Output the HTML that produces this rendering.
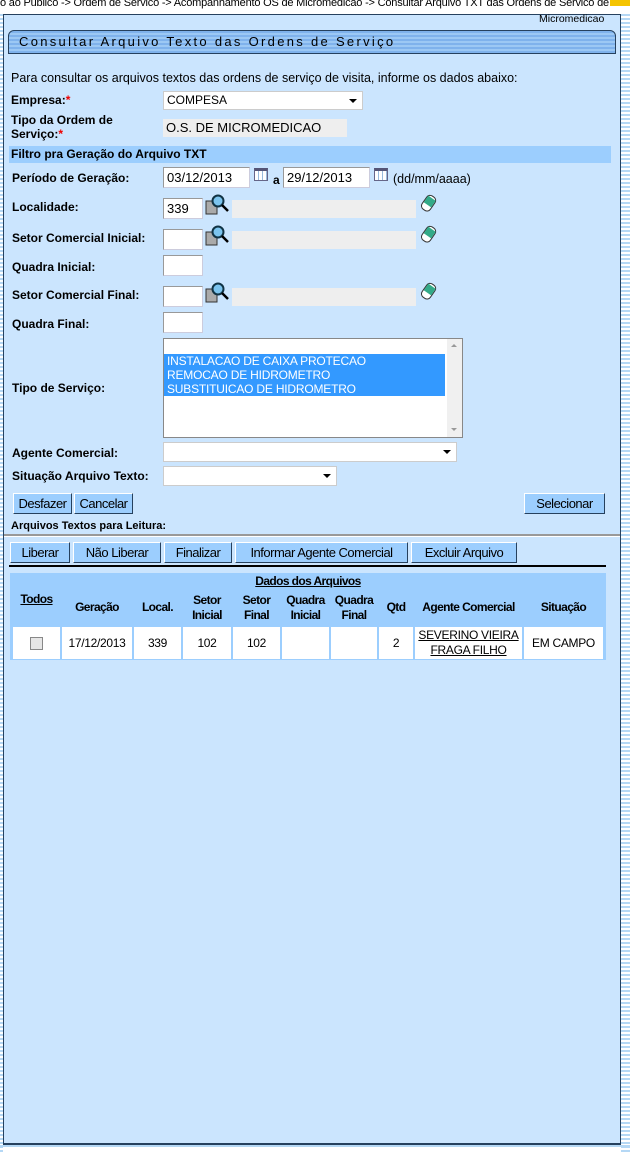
<!DOCTYPE html><html><head><meta charset="utf-8"><style>
body{margin:0;width:630px;height:1156px;position:relative;overflow:hidden;background:#fff;font-family:"Liberation Sans",Arial,sans-serif;font-size:12px;color:#000}
.a{position:absolute}
.stripes{background:repeating-linear-gradient(#fff 0 2px,#b5d8f5 2px 4px)}
.panel{left:3px;top:14px;width:616px;height:1128px;background:#cbe5fe;border:1px solid #26415e;border-bottom-width:2px}
.lbl{font-weight:bold;font-size:12px}
.in{background:#fff;border:1px solid #ccd;border-top-color:#999;border-left-color:#999;height:20px;box-sizing:border-box;font-size:13px;padding:2px 3px}
.ro{background:#eee;height:18px}
.btn{background:#9ccefe;border:1px solid #fff;border-right-color:#26415e;border-bottom-color:#26415e;height:21px;box-sizing:border-box;font-size:13px;text-align:center;line-height:19px;white-space:nowrap;letter-spacing:-0.5px}
.th{background:#9ccefe;font-weight:bold;text-align:center;font-size:12px;white-space:nowrap;letter-spacing:-0.6px}
.td{background:#fff;text-align:center;font-size:12px;white-space:nowrap;letter-spacing:-0.3px}
.sel{background:#fff;border:1px solid #ccc;box-sizing:border-box;font-size:12px;padding:2px 4px}
.arr{position:absolute;right:5px;top:7px;width:0;height:0;border-left:4px solid transparent;border-right:4px solid transparent;border-top:4px solid #000}
.req{color:#e00}
</style></head><body>
<div class="a stripes" style="left:0;top:12px;width:3px;height:1140px"></div>
<div class="a stripes" style="left:621px;top:12px;width:9px;height:1140px"></div>
<div class="a" style="left:0;top:1145px;width:630px;height:2px;background:#b5d8f5"></div>
<div class="a" style="left:0;top:-3px;white-space:nowrap;font-size:11px;background:#fff;letter-spacing:-0.2px">o ao Publico -&gt; Ordem de Servico -&gt; Acompanhamento OS de Micromedicao -&gt; Consultar Arquivo TXT das Ordens de Servico de</div>
<div class="a" style="left:610px;top:0;width:20px;height:6px;background:#f5c400"></div>
<div class="a panel"></div>
<div class="a" style="left:539px;top:13px;font-size:10.5px">Micromedicao</div>
<div class="a" style="left:8px;top:30px;width:606px;height:22px;border:1px solid #26415e;border-radius:6px 6px 0 0;background:repeating-linear-gradient(#7fb2ec 0 2px,#9cc8f4 2px 4px)"></div>
<div class="a" style="left:19px;top:34px;font-size:13px;letter-spacing:2.3px">Consultar Arquivo Texto das Ordens de Serviço</div>
<div class="a" style="left:11px;top:71px;font-size:12.5px">Para consultar os arquivos textos das ordens de serviço de visita, informe os dados abaixo:</div>
<div class="a lbl" style="left:11px;top:93px">Empresa:<span class="req">*</span></div>
<div class="a sel" style="left:163px;top:91px;width:200px;height:19px;font-size:12px;padding:1px 3px">COMPESA<span class="arr"></span></div>
<div class="a lbl" style="left:11px;top:113px;line-height:14px">Tipo da Ordem de<br>Serviço:<span class="req">*</span></div>
<div class="a ro" style="left:163px;top:119px;width:184px;font-size:13px;padding:1px 3px;box-sizing:border-box;height:18px">O.S. DE MICROMEDICAO</div>
<div class="a lbl" style="left:9px;top:146px;width:600px;height:17px;background:#9ccefe;line-height:17px;padding-left:2px">Filtro pra Geração do Arquivo TXT</div>
<div class="a lbl" style="left:12px;top:171px">Período de Geração:</div>
<div class="a in" style="left:163px;top:167px;width:87px;height:21px">03/12/2013</div>
<div class="a" style="left:254px;top:168px;width:14px;height:13px;border:1px solid #668;background:repeating-linear-gradient(90deg,#fff 0 3px,#9bd 3px 4px);box-sizing:border-box;border-top:3px solid #557"></div>
<div class="a lbl" style="left:273px;top:173px">a</div>
<div class="a in" style="left:283px;top:167px;width:87px;height:21px">29/12/2013</div>
<div class="a" style="left:374px;top:168px;width:14px;height:13px;border:1px solid #668;background:repeating-linear-gradient(90deg,#fff 0 3px,#9bd 3px 4px);box-sizing:border-box;border-top:3px solid #557"></div>
<div class="a" style="left:393px;top:172px;font-size:12.5px">(dd/mm/aaaa)</div>

<div class="a lbl" style="left:12px;top:200px">Localidade:</div>
<div class="a in" style="left:163px;top:198px;width:40px;height:21px">339</div>
<div class="a lbl" style="left:12px;top:231px">Setor Comercial Inicial:</div>
<div class="a in" style="left:163px;top:229px;width:40px;height:21px"></div>
<div class="a lbl" style="left:12px;top:260px">Quadra Inicial:</div>
<div class="a in" style="left:163px;top:255px;width:40px;height:21px"></div>
<div class="a lbl" style="left:12px;top:288px">Setor Comercial Final:</div>
<div class="a in" style="left:163px;top:286px;width:40px;height:21px"></div>
<div class="a lbl" style="left:12px;top:317px">Quadra Final:</div>
<div class="a in" style="left:163px;top:312px;width:40px;height:21px"></div>

<div class="a ro" style="left:232px;top:200px;width:184px"></div>
<div class="a ro" style="left:232px;top:231px;width:184px"></div>
<div class="a ro" style="left:232px;top:288px;width:184px"></div>
<svg class="a" style="left:205px;top:193px" width="26" height="26"><rect x="1" y="8" width="11" height="13" fill="#aaa" stroke="#333"/><circle cx="13" cy="8" r="5.5" fill="#7cc4ee" stroke="#134"  stroke-width="2"/><line x1="17" y1="12" x2="23" y2="18" stroke="#000" stroke-width="2.5"/></svg>
<svg class="a" style="left:205px;top:224px" width="26" height="26"><rect x="1" y="8" width="11" height="13" fill="#aaa" stroke="#333"/><circle cx="13" cy="8" r="5.5" fill="#7cc4ee" stroke="#134" stroke-width="2"/><line x1="17" y1="12" x2="23" y2="18" stroke="#000" stroke-width="2.5"/></svg>
<svg class="a" style="left:205px;top:281px" width="26" height="26"><rect x="1" y="8" width="11" height="13" fill="#aaa" stroke="#333"/><circle cx="13" cy="8" r="5.5" fill="#7cc4ee" stroke="#134" stroke-width="2"/><line x1="17" y1="12" x2="23" y2="18" stroke="#000" stroke-width="2.5"/></svg>
<svg class="a" style="left:419px;top:194px" width="18" height="20"><g transform="rotate(35 9 10)"><rect x="4" y="1" width="10" height="16" rx="4" fill="#fff" stroke="#333"/><rect x="4.5" y="3" width="9" height="8" fill="#3a8" /></g></svg>
<svg class="a" style="left:419px;top:225px" width="18" height="20"><g transform="rotate(35 9 10)"><rect x="4" y="1" width="10" height="16" rx="4" fill="#fff" stroke="#333"/><rect x="4.5" y="3" width="9" height="8" fill="#3a8" /></g></svg>
<svg class="a" style="left:419px;top:282px" width="18" height="20"><g transform="rotate(35 9 10)"><rect x="4" y="1" width="10" height="16" rx="4" fill="#fff" stroke="#333"/><rect x="4.5" y="3" width="9" height="8" fill="#3a8" /></g></svg>

<div class="a lbl" style="left:12px;top:381px">Tipo de Serviço:</div>
<div class="a" style="left:163px;top:338px;width:300px;height:100px;background:#fff;border:1px solid #888;box-sizing:border-box"></div>
<div class="a" style="left:447px;top:339px;width:15px;height:98px;background:#f0f0f0"></div>
<div class="a" style="left:451px;top:344px;border-left:3px solid transparent;border-right:3px solid transparent;border-bottom:3px solid #999"></div>
<div class="a" style="left:451px;top:428px;border-left:3px solid transparent;border-right:3px solid transparent;border-top:3px solid #999"></div>
<div class="a" style="left:164px;top:354px;width:281px;height:42px;background:#3399ff;color:#fff;font-size:12px;line-height:14px;padding-left:3px;box-sizing:border-box;letter-spacing:-0.2px">INSTALACAO DE CAIXA PROTECAO<br>REMOCAO DE HIDROMETRO<br>SUBSTITUICAO DE HIDROMETRO</div>

<div class="a lbl" style="left:12px;top:446px">Agente Comercial:</div>
<div class="a sel" style="left:163px;top:442px;width:294px;height:20px"><span class="arr"></span></div>
<div class="a lbl" style="left:12px;top:469px">Situação Arquivo Texto:</div>
<div class="a sel" style="left:163px;top:466px;width:174px;height:20px"><span class="arr"></span></div>

<div class="a btn" style="left:13px;top:493px;width:59px">Desfazer</div>
<div class="a btn" style="left:74px;top:493px;width:59px">Cancelar</div>
<div class="a btn" style="left:524px;top:493px;width:81px">Selecionar</div>
<div class="a" style="left:11px;top:520px;font-weight:bold;font-size:11px">Arquivos Textos para Leitura:</div>
<div class="a" style="left:4px;top:534px;width:616px;height:2px;background:#999;border-bottom:1px solid #fff"></div>

<div class="a btn" style="left:10px;top:542px;width:60px;width:60px;left:10px;width:59px"></div>
<div class="a btn" style="left:10px;top:542px;width:60px">Liberar</div>
<div class="a btn" style="left:73px;top:542px;width:88px">Não Liberar</div>
<div class="a btn" style="left:164px;top:542px;width:68px">Finalizar</div>
<div class="a btn" style="left:235px;top:542px;width:173px">Informar Agente Comercial</div>
<div class="a btn" style="left:411px;top:542px;width:106px">Excluir Arquivo</div>
<div class="a" style="left:9px;top:565px;width:597px;height:2px;background:#000"></div>

<div class="a" style="left:10px;top:573px;width:596px;height:87px;background:#9ccefe"></div>
<div class="a th" style="left:10px;top:574px;width:596px;text-decoration:underline">Dados dos Arquivos</div>
<div class="a th" style="left:13px;top:591px;width:47px;height:33px;line-height:17px;text-decoration:underline">Todos</div>
<div class="a th" style="left:62px;top:591px;width:70px;height:33px;line-height:33px">Geração</div>
<div class="a th" style="left:134px;top:591px;width:47px;height:33px;line-height:33px">Local.</div>
<div class="a th" style="left:183px;top:591px;width:48px;line-height:15px;padding-top:2px">Setor<br>Inicial</div>
<div class="a th" style="left:233px;top:591px;width:47px;line-height:15px;padding-top:2px">Setor<br>Final</div>
<div class="a th" style="left:282px;top:591px;width:47px;line-height:15px;padding-top:2px">Quadra<br>Inicial</div>
<div class="a th" style="left:331px;top:591px;width:46px;line-height:15px;padding-top:2px">Quadra<br>Final</div>
<div class="a th" style="left:379px;top:591px;width:34px;height:33px;line-height:33px">Qtd</div>
<div class="a th" style="left:415px;top:591px;width:107px;height:33px;line-height:33px">Agente Comercial</div>
<div class="a th" style="left:524px;top:591px;width:79px;height:33px;line-height:33px">Situação</div>

<div class="a td" style="left:13px;top:627px;width:47px;height:32px"><div style="margin:10px auto 0;width:11px;height:11px;border:1px solid #888;background:#e6e6e6"></div></div>
<div class="a td" style="left:62px;top:627px;width:70px;height:32px;line-height:32px">17/12/2013</div>
<div class="a td" style="left:134px;top:627px;width:47px;height:32px;line-height:32px">339</div>
<div class="a td" style="left:183px;top:627px;width:48px;height:32px;line-height:32px">102</div>
<div class="a td" style="left:233px;top:627px;width:47px;height:32px;line-height:32px">102</div>
<div class="a td" style="left:282px;top:627px;width:47px;height:32px"></div>
<div class="a td" style="left:331px;top:627px;width:46px;height:32px"></div>
<div class="a td" style="left:379px;top:627px;width:34px;height:32px;line-height:32px">2</div>
<div class="a td" style="left:415px;top:627px;width:107px;height:32px;line-height:15px;padding-top:1px;box-sizing:border-box;text-decoration:underline">SEVERINO VIEIRA<br>FRAGA FILHO</div>
<div class="a td" style="left:524px;top:627px;width:79px;height:32px;line-height:32px">EM CAMPO</div>
</body></html>
